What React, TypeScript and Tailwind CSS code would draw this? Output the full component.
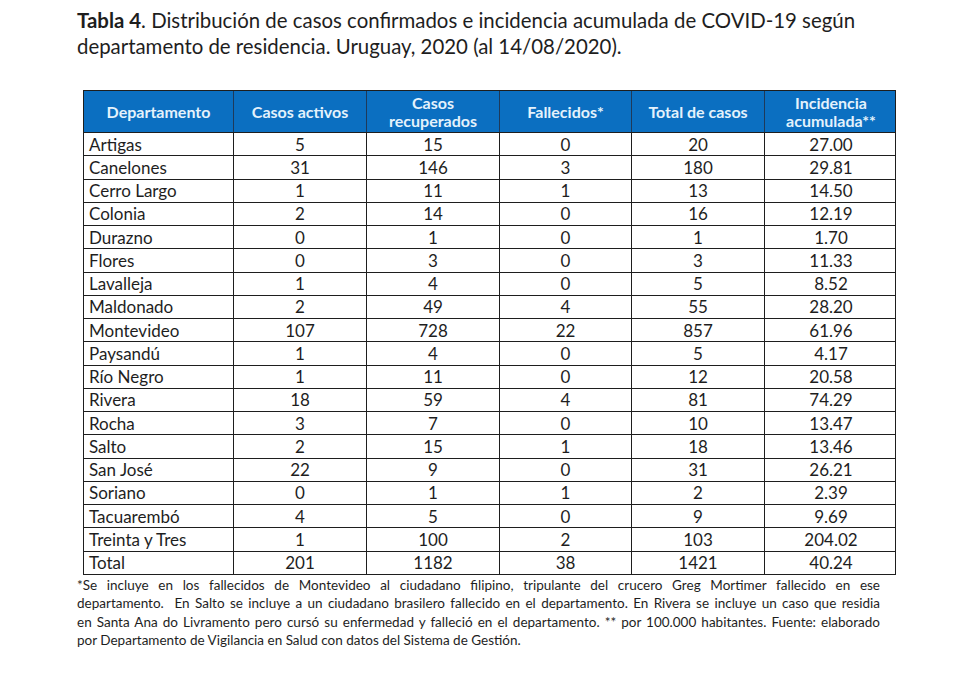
const rows: [string, string, string, string, string, string][] = [
  ["Artigas", "5", "15", "0", "20", "27.00"],
  ["Canelones", "31", "146", "3", "180", "29.81"],
  ["Cerro Largo", "1", "11", "1", "13", "14.50"],
  ["Colonia", "2", "14", "0", "16", "12.19"],
  ["Durazno", "0", "1", "0", "1", "1.70"],
  ["Flores", "0", "3", "0", "3", "11.33"],
  ["Lavalleja", "1", "4", "0", "5", "8.52"],
  ["Maldonado", "2", "49", "4", "55", "28.20"],
  ["Montevideo", "107", "728", "22", "857", "61.96"],
  ["Paysandú", "1", "4", "0", "5", "4.17"],
  ["Río Negro", "1", "11", "0", "12", "20.58"],
  ["Rivera", "18", "59", "4", "81", "74.29"],
  ["Rocha", "3", "7", "0", "10", "13.47"],
  ["Salto", "2", "15", "1", "18", "13.46"],
  ["San José", "22", "9", "0", "31", "26.21"],
  ["Soriano", "0", "1", "1", "2", "2.39"],
  ["Tacuarembó", "4", "5", "0", "9", "9.69"],
  ["Treinta y Tres", "1", "100", "2", "103", "204.02"],
  ["Total", "201", "1182", "38", "1421", "40.24"],
]

const headers = [
  ["Departamento"],
  ["Casos activos"],
  ["Casos", "recuperados"],
  ["Fallecidos*"],
  ["Total de casos"],
  ["Incidencia", "acumulada**"],
]

const cols = "grid grid-cols-[149px_133px_133px_132px_133px_133px]"

export default function App() {
  return (
    <div className="w-[968px] h-[674px] bg-white text-[#1e1e1e] font-['Lato',sans-serif] overflow-hidden">
      <div className="pl-[77px] pt-[7px] text-[20.4px] leading-[26px]">
        <p>
          <span className="font-bold">Tabla 4</span>. Distribución de casos confirmados e incidencia acumulada de COVID-19 según
        </p>
        <p>departamento de residencia. Uruguay, 2020 (al 14/08/2020).</p>
      </div>

      <div className="ml-[83px] mt-[31px] w-[813px] border-[1.5px] border-[#1e1e1e]">
        <div className={`${cols} h-[41px] bg-[#0b6fc1] text-[#e4f2fc] font-bold text-[16px] leading-[18px]`}>
          {headers.map((h, i) => (
            <div
              key={i}
              className={`flex flex-col items-center justify-center ${i > 0 ? "border-l-[1.5px] border-[#1e3a5a]" : ""}`}
            >
              {h.map((l) => (
                <span key={l}>{l}</span>
              ))}
            </div>
          ))}
        </div>
        {rows.map((r) => (
          <div key={r[0]} className={`${cols} h-[23.25px] border-t-[1.5px] border-[#1e1e1e] text-[17px] leading-none`}>
            {r.map((c, i) => (
              <div
                key={i}
                className={`flex items-center ${i === 0 ? "pl-[5px]" : "justify-center border-l-[1.5px] border-[#1e1e1e]"}`}
              >
                {c}
              </div>
            ))}
          </div>
        ))}
      </div>

      <div className="ml-[77px] mt-[1px] w-[803px] text-[13.5px] leading-[18.5px]">
        <div className="text-justify [text-align-last:justify] whitespace-nowrap">
          *Se incluye en los fallecidos de Montevideo al ciudadano filipino, tripulante del crucero Greg Mortimer fallecido en ese
        </div>
        <div className="text-justify [text-align-last:justify] whitespace-nowrap">
          departamento.&nbsp; En Salto se incluye a un ciudadano brasilero fallecido en el departamento. En Rivera se incluye un caso que residia
        </div>
        <div className="text-justify [text-align-last:justify] whitespace-nowrap">
          en Santa Ana do Livramento pero cursó su enfermedad y falleció en el departamento. ** por 100.000 habitantes. Fuente: elaborado
        </div>
        <div>por Departamento de Vigilancia en Salud con datos del Sistema de Gestión.</div>
      </div>
    </div>
  )
}
